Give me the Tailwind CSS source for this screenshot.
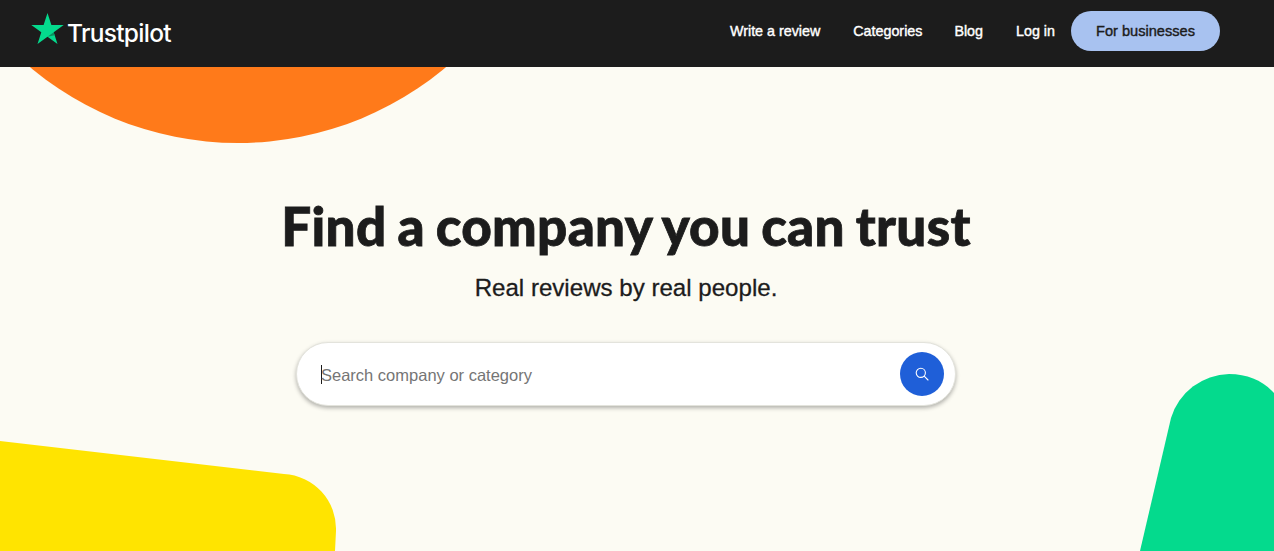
<!DOCTYPE html>
<html lang="en">
<head>
  <meta charset="UTF-8">
  <title>Trustpilot</title>
  <script src="https://cdn.jsdelivr.net/npm/@tailwindcss/browser@4"></script>
</head>
<body class="h-[551px] overflow-hidden bg-[#fcfbf3] font-['Liberation_Sans',sans-serif] text-[#1c1c1c]">
  <div class="relative h-[551px] overflow-hidden">

    <!-- Background shapes -->
    <svg class="absolute left-0 top-0" width="1274" height="551" viewBox="0 0 1274 551">
      <circle cx="238" cy="-180" r="323" fill="#ff7a1a"/>
      <path d="M0 441 L284 474 A55 55 0 0 1 336 531 L335 551 L0 551 Z" fill="#ffe400"/>
      <path d="M1140 551 L1171 418 A62 62 0 0 1 1229 374 C1248 374 1263 381 1274 393 L1274 551 Z" fill="#04da8d"/>
    </svg>

    <!-- Header -->
    <header class="relative z-10 flex h-[67px] items-center bg-[#1c1c1c] pl-[31px] pr-[54px]">
      <a href="#" class="flex items-center">
        <svg width="33" height="32" viewBox="0 0 33 32" class="mb-[9px]">
          <path d="M16.5 0 L20.4 12 L32.7 12 L22.7 19.3 L26.5 31 L16.5 23.8 L6.5 31 L10.3 19.3 L0.3 12 L12.6 12 Z" fill="#04da8d"/>
          <path d="M22.7 19.3 L23.6 22.3 L16.5 23.8 Z" fill="#0a8f5f"/>
        </svg>
        <span class="ml-[3px] font-['Inter',sans-serif] text-[24.5px] font-medium leading-none tracking-[-0.7px] text-white">Trustpilot</span>
      </a>
      <nav class="mb-[6px] ml-auto flex items-center text-[14.3px] font-medium text-white [-webkit-text-stroke:0.4px_white]">
        <a href="#" class="mr-[33px] pt-0.5">Write a review</a>
        <a href="#" class="mr-8 pt-0.5">Categories</a>
        <a href="#" class="mr-[33px] pt-0.5">Blog</a>
        <a href="#" class="mr-4 pt-0.5">Log in</a>
        <a href="#" class="flex h-10 w-[149px] items-center justify-center rounded-full bg-[#a8c2f0] pt-0.5 text-[14.6px] text-[#1c1c1c] [-webkit-text-stroke:0.4px_#1c1c1c]">For businesses</a>
      </nav>
    </header>

    <!-- Hero -->
    <main class="relative z-10 flex w-[1252px] flex-col items-center pt-[128px]">
      <h1 class="font-['Lato',sans-serif] text-[53px] font-black leading-[62px] tracking-[0.3px] [-webkit-text-stroke:0.8px_#1c1c1c] [word-spacing:-2px]">Find a company you can trust</h1>
      <p class="mt-[16px] text-[24.1px] leading-[30px] [-webkit-text-stroke:0.3px_#1c1c1c]">Real reviews by real people.</p>
      <form class="mt-[39px] flex h-[64px] w-[660px] items-center rounded-full border border-[#e3e3dc] bg-white pl-6 pr-[11px] shadow-[0_2px_4px_rgba(0,0,0,0.3)]">
        <span class="h-[19px] w-px bg-[#1c1c1c]"></span>
        <span class="-ml-px flex-1 pt-0.5 text-[16.5px] text-[#757575]">Search company or category</span>
        <button type="button" class="flex size-11 items-center justify-center rounded-full bg-[#1f5fd8]">
          <svg width="14" height="14" viewBox="0 0 14 14" fill="none" stroke="white" stroke-width="1.1">
            <circle cx="5.8" cy="5.8" r="4.6"/>
            <path d="M9.2 9.2 L13 13" stroke-linecap="round"/>
          </svg>
        </button>
      </form>
    </main>
  </div>
</body>
</html>
